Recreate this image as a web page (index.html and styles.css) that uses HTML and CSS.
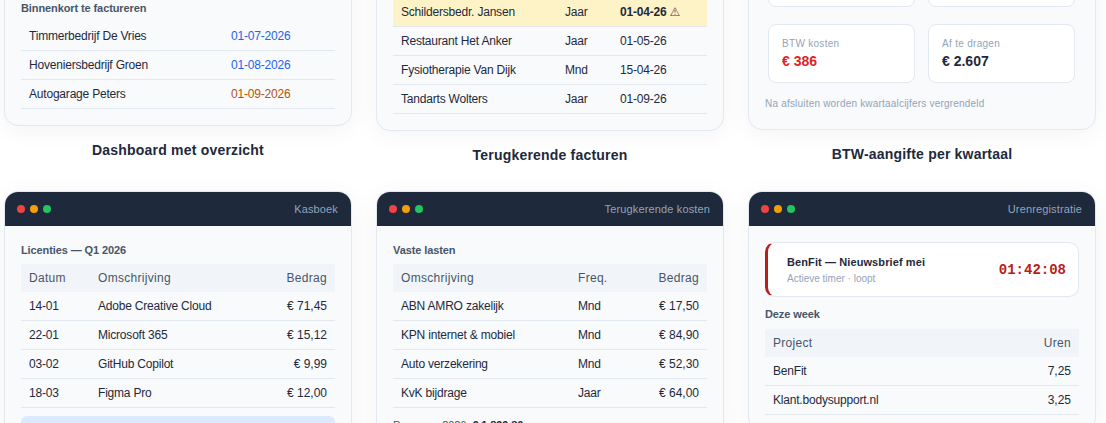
FILE: index.html
```html
<!DOCTYPE html>
<html lang="nl">
<head>
  <meta charset="UTF-8" />
  <meta name="viewport" content="width=device-width, initial-scale=1.0"/>
  <title>Boekhouding - Schermen</title>
  <link rel="stylesheet" href="styles.css">
</head>
<body>

<main class="screens">

  <!-- bovenste rij: valt deels buiten beeld -->
  <figure class="screen">
    <div class="window">
      <div class="window-bar">
        <div class="dots"><span class="dot red"></span><span class="dot amber"></span><span class="dot green"></span></div>
        <span class="window-title">Dashboard</span>
      </div>
      <div class="window-body">
        <div class="spacer-stats"></div>
        <div class="label">Binnenkort te factureren</div>
        <table>
          <colgroup><col class="w-202"><col></colgroup>
          <tr><td>Timmerbedrijf De Vries</td><td class="soon">01-07-2026</td></tr>
          <tr><td>Hoveniersbedrijf Groen</td><td class="soon">01-08-2026</td></tr>
          <tr><td>Autogarage Peters</td><td class="later">01-09-2026</td></tr>
        </table>
      </div>
    </div>
    <figcaption>Dashboard met overzicht</figcaption>
  </figure>

  <figure class="screen">
    <div class="window">
      <div class="window-bar">
        <div class="dots"><span class="dot red"></span><span class="dot amber"></span><span class="dot green"></span></div>
        <span class="window-title">Terugkerende facturen</span>
      </div>
      <div class="window-body">
        <div class="label">Contracten</div>
        <table>
          <colgroup><col class="w-164"><col class="w-55"><col></colgroup>
          <tr><th>Klant</th><th>Freq.</th><th>Volgende</th></tr>
          <tr class="due"><td>Schildersbedr. Jansen</td><td>Jaar</td><td><b>01-04-26</b> <span class="warn">⚠</span></td></tr>
          <tr><td>Restaurant Het Anker</td><td>Jaar</td><td>01-05-26</td></tr>
          <tr><td>Fysiotherapie Van Dijk</td><td>Mnd</td><td>15-04-26</td></tr>
          <tr><td>Tandarts Wolters</td><td>Jaar</td><td>01-09-26</td></tr>
        </table>
      </div>
    </div>
    <figcaption>Terugkerende facturen</figcaption>
  </figure>

  <figure class="screen">
    <div class="window">
      <div class="window-bar">
        <div class="dots"><span class="dot red"></span><span class="dot amber"></span><span class="dot green"></span></div>
        <span class="window-title">BTW-aangifte</span>
      </div>
      <div class="window-body">
        <div class="stats">
          <div class="stat"><div class="stat-label">Omzet</div><div class="stat-value">€ 14.252</div></div>
          <div class="stat"><div class="stat-label">BTW omzet</div><div class="stat-value">€ 2.993</div></div>
          <div class="stat"><div class="stat-label">BTW kosten</div><div class="stat-value negative">€ 386</div></div>
          <div class="stat"><div class="stat-label">Af te dragen</div><div class="stat-value">€ 2.607</div></div>
        </div>
        <p class="note">Na afsluiten worden kwartaalcijfers vergrendeld</p>
      </div>
    </div>
    <figcaption>BTW-aangifte per kwartaal</figcaption>
  </figure>

  <!-- onderste rij -->
  <figure class="screen">
    <div class="window">
      <div class="window-bar">
        <div class="dots"><span class="dot red"></span><span class="dot amber"></span><span class="dot green"></span></div>
        <span class="window-title">Kasboek</span>
      </div>
      <div class="window-body">
        <div class="label">Licenties — Q1 2026</div>
        <table>
          <colgroup><col class="w-69"><col class="w-150"><col></colgroup>
          <tr><th>Datum</th><th>Omschrijving</th><th class="right">Bedrag</th></tr>
          <tr><td>14-01</td><td>Adobe Creative Cloud</td><td class="right">€ 71,45</td></tr>
          <tr><td>22-01</td><td>Microsoft 365</td><td class="right">€ 15,12</td></tr>
          <tr><td>03-02</td><td>GitHub Copilot</td><td class="right">€ 9,99</td></tr>
          <tr><td>18-03</td><td>Figma Pro</td><td class="right">€ 12,00</td></tr>
        </table>
        <div class="total">Totaal Q1: € 108,56</div>
      </div>
    </div>
  </figure>

  <figure class="screen">
    <div class="window">
      <div class="window-bar">
        <div class="dots"><span class="dot red"></span><span class="dot amber"></span><span class="dot green"></span></div>
        <span class="window-title">Terugkerende kosten</span>
      </div>
      <div class="window-body">
        <div class="label">Vaste lasten</div>
        <table>
          <colgroup><col class="w-177"><col class="w-60"><col></colgroup>
          <tr><th>Omschrijving</th><th>Freq.</th><th class="right">Bedrag</th></tr>
          <tr><td>ABN AMRO zakelijk</td><td>Mnd</td><td class="right">€ 17,50</td></tr>
          <tr><td>KPN internet &amp; mobiel</td><td>Mnd</td><td class="right">€ 84,90</td></tr>
          <tr><td>Auto verzekering</td><td>Mnd</td><td class="right">€ 52,30</td></tr>
          <tr><td>KvK bijdrage</td><td>Jaar</td><td class="right">€ 64,00</td></tr>
        </table>
        <p class="forecast">Prognose 2026: <b>€ 1.899,80</b></p>
      </div>
    </div>
  </figure>

  <figure class="screen">
    <div class="window">
      <div class="window-bar">
        <div class="dots"><span class="dot red"></span><span class="dot amber"></span><span class="dot green"></span></div>
        <span class="window-title">Urenregistratie</span>
      </div>
      <div class="window-body">
        <div class="timer">
          <div>
            <div class="timer-name">BenFit — Nieuwsbrief mei</div>
            <div class="timer-sub">Actieve timer · loopt</div>
          </div>
          <div class="timer-clock">01:42:08</div>
        </div>
        <div class="label week">Deze week</div>
        <table>
          <colgroup><col class="w-220"><col></colgroup>
          <tr><th>Project</th><th class="right">Uren</th></tr>
          <tr><td>BenFit</td><td class="right">7,25</td></tr>
          <tr><td>Klant.bodysupport.nl</td><td class="right">3,25</td></tr>
        </table>
      </div>
    </div>
  </figure>

</main>

</body>
</html>
```

FILE: styles.css
```css
* { box-sizing: border-box; }
html, body {
  height: 423px;
  overflow: hidden;
}
body {
  margin: 0;
  font-family: "Liberation Sans", Arial, sans-serif;
  background: #fff;
  color: #1e293b;
}

.screens {
  display: grid;
  grid-template-columns: repeat(3, 1fr);
  column-gap: 24px;
  row-gap: 28px;
  align-items: start;
  margin-top: -103px;
  padding: 0 10px 0 4px;
}

.screen { margin: 0; }

.screen figcaption {
  margin-top: 16px;
  text-align: center;
  font-size: 14px;
  line-height: 16px;
  font-weight: bold;
  letter-spacing: 0.2px;
  color: #1e293b;
}

.window {
  background: #f8fafc;
  border: 1px solid #e2e8f0;
  border-radius: 14px;
  overflow: hidden;
  box-shadow: 0 4px 24px rgba(0,0,0,0.05);
}

.window-bar {
  display: flex;
  justify-content: space-between;
  align-items: center;
  height: 34px;
  padding: 0 13px 0 12px;
  background: #1e293b;
}

.dots { display: flex; gap: 5px; }
.dot {
  width: 8px;
  height: 8px;
  border-radius: 50%;
}
.dot.red { background: #ef4444; }
.dot.amber { background: #f59e0b; }
.dot.green { background: #22c55e; }

.window-title {
  font-size: 11px;
  letter-spacing: 0.14px;
  color: #94a3b8;
}

.window-body { padding: 16px; }

.spacer-stats { height: 52px; }

.label {
  margin-bottom: 6px;
  font-size: 11px;
  line-height: 16px;
  font-weight: bold;
  letter-spacing: -0.1px;
  color: #475569;
}

.label.week { margin-bottom: 7px; }

table {
  width: 100%;
  table-layout: fixed;
  border-collapse: collapse;
  font-size: 12px;
  line-height: 14px;
}

th {
  padding: 7px 8px;
  text-align: left;
  font-weight: normal;
  letter-spacing: 0.3px;
  color: #475569;
  background: #f1f5f9;
}

td {
  padding: 7px 8px;
  border-bottom: 1px solid #e2e8f0;
  letter-spacing: -0.2px;
  white-space: nowrap;
}

th.right { text-align: right; }
td.right { text-align: right; letter-spacing: 0; }

.w-69 { width: 69px; }
.w-150 { width: 150px; }
.w-164 { width: 164px; }
.w-55 { width: 55px; }
.w-177 { width: 177px; }
.w-60 { width: 60px; }
.w-202 { width: 202px; }
.w-220 { width: 220px; }

.soon { color: #2563eb; }
.later { color: #b45309; }

.due td { background: #fef3c7; }
.warn {
  font-family: "DejaVu Sans", sans-serif;
  font-weight: bold;
  color: #334155;
}

.stats {
  display: grid;
  grid-template-columns: 1fr 1fr;
  gap: 17px 13px;
  padding: 0 4px 0 3px;
}

.stat {
  height: 59px;
  padding: 13px 13px;
  background: #fff;
  border: 1px solid #e2e8f0;
  border-radius: 8px;
}

.stat-label {
  font-size: 10px;
  line-height: 12px;
  letter-spacing: 0.3px;
  color: #94a3b8;
}

.stat-value {
  margin-top: 3px;
  font-size: 14px;
  line-height: 16px;
  font-weight: bold;
}

.stat-value.negative { color: #dc2626; }

.note {
  margin: 15px 0 3px;
  font-size: 10px;
  line-height: 12px;
  letter-spacing: 0.2px;
  color: #94a3b8;
}

.total {
  margin-top: 8px;
  padding: 10px 12px;
  font-size: 12px;
  background: #dbeafe;
  border-radius: 6px;
}

.forecast {
  margin: 10px 0 0;
  font-size: 11px;
  line-height: 14px;
  letter-spacing: -0.1px;
  color: #475569;
}
.forecast b { color: #1e293b; }

.timer {
  display: flex;
  justify-content: space-between;
  align-items: center;
  height: 55px;
  margin-bottom: 9px;
  padding: 0 12px 0 19px;
  background: #fff;
  border: 1px solid #e2e8f0;
  border-left: 3px solid #b91c1c;
  border-radius: 10px;
}

.timer-name {
  font-size: 11px;
  line-height: 14px;
  font-weight: bold;
  letter-spacing: 0.1px;
}

.timer-sub {
  margin-top: 4px;
  font-size: 10px;
  line-height: 12px;
  color: #94a3b8;
}

.timer-clock {
  font-family: "Liberation Mono", monospace;
  font-size: 14px;
  font-weight: bold;
  color: #b91c1c;
}
```
